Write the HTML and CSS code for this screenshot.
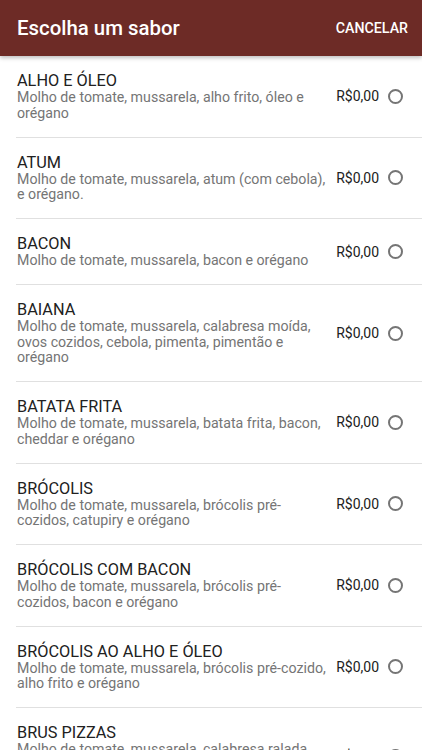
FILE: index.html
```html
<!DOCTYPE html>
<html lang="pt-BR">
<head>
    <meta charset="UTF-8">
    <meta name="viewport" content="width=device-width, initial-scale=1.0">
    <title>Escolha um sabor</title>
    <link rel="stylesheet" href="styles.css">
</head>
<body>
    <header class="toolbar">
        <h1 class="toolbar-title">Escolha um sabor</h1>
        <button class="toolbar-action">CANCELAR</button>
    </header>

    <ul class="flavor-list">
        <li class="flavor">
            <div class="flavor-text">
                <div class="flavor-name">ALHO E ÓLEO</div>
                <div class="flavor-desc">Molho de tomate, mussarela, alho frito, óleo e orégano</div>
            </div>
            <span class="flavor-price">R$0,00</span>
            <span class="radio"></span>
        </li>
        <li class="flavor">
            <div class="flavor-text">
                <div class="flavor-name">ATUM</div>
                <div class="flavor-desc">Molho de tomate, mussarela, atum (com cebola), e orégano.</div>
            </div>
            <span class="flavor-price">R$0,00</span>
            <span class="radio"></span>
        </li>
        <li class="flavor">
            <div class="flavor-text">
                <div class="flavor-name">BACON</div>
                <div class="flavor-desc">Molho de tomate, mussarela, bacon e orégano</div>
            </div>
            <span class="flavor-price">R$0,00</span>
            <span class="radio"></span>
        </li>
        <li class="flavor">
            <div class="flavor-text">
                <div class="flavor-name">BAIANA</div>
                <div class="flavor-desc">Molho de tomate, mussarela, calabresa moída, ovos cozidos, cebola, pimenta, pimentão e orégano</div>
            </div>
            <span class="flavor-price">R$0,00</span>
            <span class="radio"></span>
        </li>
        <li class="flavor">
            <div class="flavor-text">
                <div class="flavor-name">BATATA FRITA</div>
                <div class="flavor-desc">Molho de tomate, mussarela, batata frita, bacon, cheddar e orégano</div>
            </div>
            <span class="flavor-price">R$0,00</span>
            <span class="radio"></span>
        </li>
        <li class="flavor">
            <div class="flavor-text">
                <div class="flavor-name">BRÓCOLIS</div>
                <div class="flavor-desc">Molho de tomate, mussarela, brócolis pré-cozidos, catupiry e orégano</div>
            </div>
            <span class="flavor-price">R$0,00</span>
            <span class="radio"></span>
        </li>
        <li class="flavor">
            <div class="flavor-text">
                <div class="flavor-name">BRÓCOLIS COM BACON</div>
                <div class="flavor-desc">Molho de tomate, mussarela, brócolis pré-cozidos, bacon e orégano</div>
            </div>
            <span class="flavor-price">R$0,00</span>
            <span class="radio"></span>
        </li>
        <li class="flavor">
            <div class="flavor-text">
                <div class="flavor-name">BRÓCOLIS AO ALHO E ÓLEO</div>
                <div class="flavor-desc">Molho de tomate, mussarela, brócolis pré-cozido, alho frito e orégano</div>
            </div>
            <span class="flavor-price">R$0,00</span>
            <span class="radio"></span>
        </li>
        <li class="flavor">
            <div class="flavor-text">
                <div class="flavor-name">BRUS PIZZAS</div>
                <div class="flavor-desc">Molho de tomate, mussarela, calabresa ralada, cebola, pimenta calabresa, azeitonas, catupiry e orégano</div>
            </div>
            <span class="flavor-price">R$0,00</span>
            <span class="radio"></span>
        </li>
    </ul>
</body>
</html>
```

FILE: styles.css
```css
/* styles.css */
html, body {
    margin: 0;
    height: 100%;
    overflow: hidden;
}

body {
    font-family: 'Roboto', 'Liberation Sans', sans-serif;
    background: #fff;
    color: #212121;
}

.toolbar {
    height: 56px;
    display: flex;
    align-items: center;
    justify-content: space-between;
    padding: 0 14px 0 17px;
    background-color: #6d2b26;
    box-shadow: 0 2px 4px rgba(0, 0, 0, 0.25);
    position: relative; /* keeps the shadow above the list */
    z-index: 1;
}

.toolbar-title {
    margin: 0;
    font-size: 20.4px;
    font-weight: 500;
    color: #fff;
}

.toolbar-action {
    border: none;
    background: none;
    padding: 0;
    font-family: inherit;
    font-size: 14.2px;
    font-weight: 500;
    color: #fff;
}

.flavor-list {
    list-style: none;
    margin: 0;
    padding: 0;
}

.flavor {
    display: flex;
    align-items: center;
    margin-left: 16px;
    padding: 15.25px 19px 15.25px 1px;
    border-bottom: 1px solid #e0e0e0;
}

.flavor-text {
    flex: 1;
    min-width: 0;
}

.flavor-name {
    font-size: 16.3px;
    line-height: 19px;
    color: #212121;
}

.flavor-desc {
    font-size: 14.2px;
    line-height: 15.5px;
    color: #757575;
}

.flavor-price {
    margin-left: 6px;
    font-size: 14px;
    color: #212121;
}

.radio {
    width: 15px;
    height: 15px;
    margin-left: 9px;
    box-sizing: border-box;
    border: 2px solid #757575;
    border-radius: 50%;
    flex-shrink: 0;
}
```
